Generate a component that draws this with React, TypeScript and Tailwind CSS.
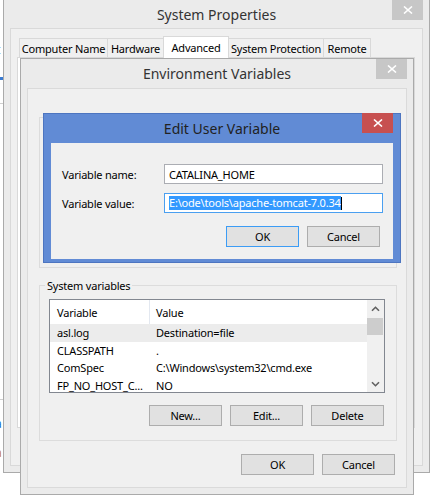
import React from "react";

function Close({ className }: { className: string }) {
  return (
    <div className={`absolute flex h-[20px] w-[31px] items-center justify-center ${className}`}>
      <svg width="10" height="8" viewBox="0 0 10 8" fill="none">
        <path d="M1 0.5L9 7.5M9 0.5L1 7.5" stroke="white" strokeWidth="1.6" />
      </svg>
    </div>
  );
}

function Btn({ children, primary }: { children: React.ReactNode; primary?: boolean }) {
  return (
    <div
      className={`flex h-[21px] w-[73px] items-center justify-center border bg-[#e1e1e1] ${
        primary ? "border-[#3c9cf5]" : "border-[#adadad]"
      }`}
    >
      {children}
    </div>
  );
}

function Chevron({ down }: { down?: boolean }) {
  return (
    <svg width="9" height="6" viewBox="0 0 9 6" fill="none">
      <path d={down ? "M1 1.2L4.5 4.7L8 1.2" : "M1 4.8L4.5 1.3L8 4.8"} stroke="#606060" strokeWidth="1.6" />
    </svg>
  );
}

const tabs = [
  { label: "Computer Name", w: "w-[89px]" },
  { label: "Hardware", w: "w-[57px]" },
  { label: "Advanced", w: "w-[66px]", active: true },
  { label: "System Protection", w: "w-[96px]" },
  { label: "Remote", w: "w-[48px]" },
];

const rows = [
  { name: "asl.log", value: "Destination=file", selected: true },
  { name: "CLASSPATH", value: "." },
  { name: "ComSpec", value: "C:\\Windows\\system32\\cmd.exe" },
  { name: "FP_NO_HOST_C...", value: "NO" },
];

export default function App() {
  return (
    <div className="relative h-[497px] w-[430px] overflow-hidden bg-white font-['Noto_Sans','Open_Sans',sans-serif] text-[11px] leading-[15px] tracking-[-0.2px] text-black">
      {/* bits of whatever sits behind */}
      <span className="absolute left-[-4px] top-[42px] text-[12px]">t</span>
      <div className="absolute left-0 top-[77px] h-[3px] w-[3px] bg-[#3b7bd1]" />
      <div className="absolute left-0 top-[103px] h-px w-[3px] bg-[#cfcfcf]" />
      <div className="absolute left-0 top-[399px] h-px w-[3px] bg-[#cfcfcf]" />
      <span className="absolute left-[-5px] top-[416px] text-[12px] text-[#1a6fd0]">a</span>
      <span className="absolute left-[-5px] top-[445px] text-[12px] text-[#c57a17]">a</span>

      {/* System Properties */}
      <div className="absolute left-[3px] top-[-1px] flex h-[474px] w-[427px] flex-col border border-[#aaaaaa] bg-[#ebebeb]">
        <div className="flex h-[28px] shrink-0 items-center justify-center text-[14px] tracking-normal text-[#333]">
          System Properties
        </div>
        <Close className="right-[6px] top-0 bg-[#c7c7c7]" />
        <div className="mx-[6px] mb-[6px] flex flex-1 flex-col border border-[#d9d9d9] bg-[#f0f0f0] pl-[6px] pr-[7px] pt-[7px]">
          <div className="flex items-end pl-[2px]">
            {tabs.map((t, i) => (
              <div
                key={t.label}
                className={`flex items-center justify-center whitespace-nowrap border border-b-0 border-[#d9d9d9] ${t.w} ${
                  i > 0 ? "-ml-px" : ""
                } ${t.active ? "relative z-10 -mb-px h-[22px] bg-white" : "h-[19px] bg-[#f0f0f0]"}`}
              >
                {t.label}
              </div>
            ))}
          </div>
          <div className="h-[371px] border border-[#d9d9d9] bg-white" />
        </div>
      </div>

      {/* Environment Variables */}
      <div className="absolute left-[20px] top-[58px] flex h-[437px] w-[394px] flex-col border border-[#aaaaaa] bg-[#ebebeb]">
        <div className="flex h-[29px] shrink-0 items-center justify-center text-[14px] tracking-normal text-[#333]">
          Environment Variables
        </div>
        <Close className="right-[6px] top-0 bg-[#c7c7c7]" />
        <div className="mx-[6px] mb-[6px] flex flex-1 flex-col border border-[#dadada] bg-[#f0f0f0] pl-[11px] pr-[9px]">
          <fieldset className="mt-[21px] h-[158px] border border-[#dcdcdc]">
            <legend className="ml-[5px] px-[2px]">User variables for Admin</legend>
          </fieldset>

          <fieldset className="mt-[10px] border border-[#dcdcdc] pb-[14px]">
            <legend className="ml-[5px] px-[2px]">System variables</legend>
            <div className="ml-[9px] mr-[11px] mt-[6px] flex h-[94px] border border-[#828790] bg-white">
              <div className="flex min-w-0 flex-1 flex-col">
                <div className="flex h-[24px] shrink-0">
                  <div className="flex w-[100px] items-center border-r border-[#e3e8f0] pl-[7px]">Variable</div>
                  <div className="flex flex-1 items-center pl-[6px]">Value</div>
                </div>
                {rows.map((r) => (
                  <div
                    key={r.name}
                    className={`flex h-[17.5px] shrink-0 items-center whitespace-nowrap ${r.selected ? "bg-[#ececec]" : ""}`}
                  >
                    <div className="w-[100px] overflow-hidden pl-[7px]">{r.name}</div>
                    <div className="flex-1 overflow-hidden pl-[6px]">{r.value}</div>
                  </div>
                ))}
              </div>
              <div className="flex w-[17px] flex-col bg-[#f0f0f0]">
                <div className="flex h-[18px] items-center justify-center">
                  <Chevron />
                </div>
                <div className="mr-px h-[17px] bg-[#cdcdcd]" />
                <div className="flex-1" />
                <div className="flex h-[17px] items-center justify-center">
                  <Chevron down />
                </div>
              </div>
            </div>
            <div className="ml-auto mr-[12px] mt-[12px] flex w-max gap-[8px]">
              <Btn>New...</Btn>
              <Btn>Edit...</Btn>
              <Btn>Delete</Btn>
            </div>
          </fieldset>

          <div className="ml-auto mr-[2px] mt-[13px] flex gap-[8px]">
            <Btn>OK</Btn>
            <Btn>Cancel</Btn>
          </div>
        </div>
      </div>

      {/* Edit User Variable */}
      <div className="absolute left-[43px] top-[113px] flex h-[150px] w-[358px] flex-col border border-[#4d75c0] bg-[#618bd5]">
        <div className="flex h-[29px] shrink-0 items-center justify-center text-[14px] tracking-normal text-[#222]">
          Edit User Variable
        </div>
        <Close className="right-[7px] top-[-1px] bg-[#c75050]" />
        <div className="mx-[7px] mb-[3px] flex flex-1 flex-col bg-[#f0f0f0] pl-[11px] pr-[10px] pt-[21px]">
          <div className="flex items-center">
            <div className="w-[102px]">Variable name:</div>
            <div className="flex h-[20px] w-[219px] items-center border border-[#abadb3] bg-white pl-[4px]">
              CATALINA_HOME
            </div>
          </div>
          <div className="mt-[9px] flex items-center">
            <div className="w-[102px]">Variable value:</div>
            <div className="flex h-[20px] w-[219px] items-center border border-[#4a9ff0] bg-white pl-[4px]">
              <span className="bg-[#3399ff] leading-[14px] text-white">E:\ode\tools\apache-tomcat-7.0.34</span>
              <span className="h-[13px] w-px bg-black" />
            </div>
          </div>
          <div className="ml-auto mr-[3px] mt-[13px] flex gap-[8px]">
            <Btn primary>OK</Btn>
            <Btn>Cancel</Btn>
          </div>
        </div>
      </div>
    </div>
  );
}
